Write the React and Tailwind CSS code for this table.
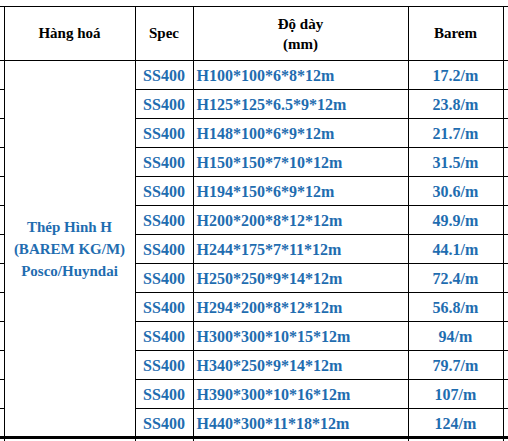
import React from 'react';

const rows = [
  ['H100*100*6*8*12m', '17.2/m'],
  ['H125*125*6.5*9*12m', '23.8/m'],
  ['H148*100*6*9*12m', '21.7/m'],
  ['H150*150*7*10*12m', '31.5/m'],
  ['H194*150*6*9*12m', '30.6/m'],
  ['H200*200*8*12*12m', '49.9/m'],
  ['H244*175*7*11*12m', '44.1/m'],
  ['H250*250*9*14*12m', '72.4/m'],
  ['H294*200*8*12*12m', '56.8/m'],
  ['H300*300*10*15*12m', '94/m'],
  ['H340*250*9*14*12m', '79.7/m'],
  ['H390*300*10*16*12m', '107/m'],
  ['H440*300*11*18*12m', '124/m'],
];

const cell = 'border border-black p-0';

export default function App() {
  return (
    <div className="w-[508px] h-[441px] overflow-hidden bg-white pt-[6px]" style={{ fontFamily: '"Liberation Serif", "Times New Roman", serif' }}>
      <table className="border-collapse table-fixed w-[509px] font-bold">
        <colgroup>
          <col className="w-[4px]" />
          <col className="w-[131px]" />
          <col className="w-[58px]" />
          <col className="w-[215px]" />
          <col className="w-[95px]" />
          <col />
        </colgroup>
        <thead>
          <tr className="h-[54px] text-[15px] text-black">
            <th className={`${cell} border-l-0`}></th>
            <th className={cell}>Hàng hoá</th>
            <th className={cell}>Spec</th>
            <th className={`${cell} leading-[20px]`}>
              Độ dày
              <br />
              (mm)
            </th>
            <th className={cell}>Barem</th>
            <th className={`${cell} border-r-0`}></th>
          </tr>
        </thead>
        <tbody className="text-[#1f6db0]">
          {rows.map(([size, barem], i) => (
            <tr key={size} className={`h-[29px] text-[16px] ${i === rows.length - 1 ? 'border-b-[3px] border-black' : ''}`}>
              <td className={`${cell} border-l-0`}></td>
              {i === 0 && (
                <td rowSpan={rows.length} className={`${cell} text-center text-[15px] leading-[22px]`}>
                  Thép Hình H
                  <br />
                  (BAREM KG/M)
                  <br />
                  Posco/Huyndai
                </td>
              )}
              <td className={`${cell} text-center pt-[2px]`}>SS400</td>
              <td className={`${cell} pl-[3px] pt-[2px]`}>{size}</td>
              <td className={`${cell} text-center pt-[2px]`}>{barem}</td>
              <td className={`${cell} border-r-0`}></td>
            </tr>
          ))}
          <tr className="h-[10px]">
            <td className={`${cell} border-l-0 border-b-0`}></td>
            <td className={`${cell} border-b-0`}></td>
            <td className={`${cell} border-b-0`}></td>
            <td className={`${cell} border-b-0`}></td>
            <td className={`${cell} border-b-0`}></td>
            <td className={`${cell} border-r-0 border-b-0`}></td>
          </tr>
        </tbody>
      </table>
    </div>
  );
}
